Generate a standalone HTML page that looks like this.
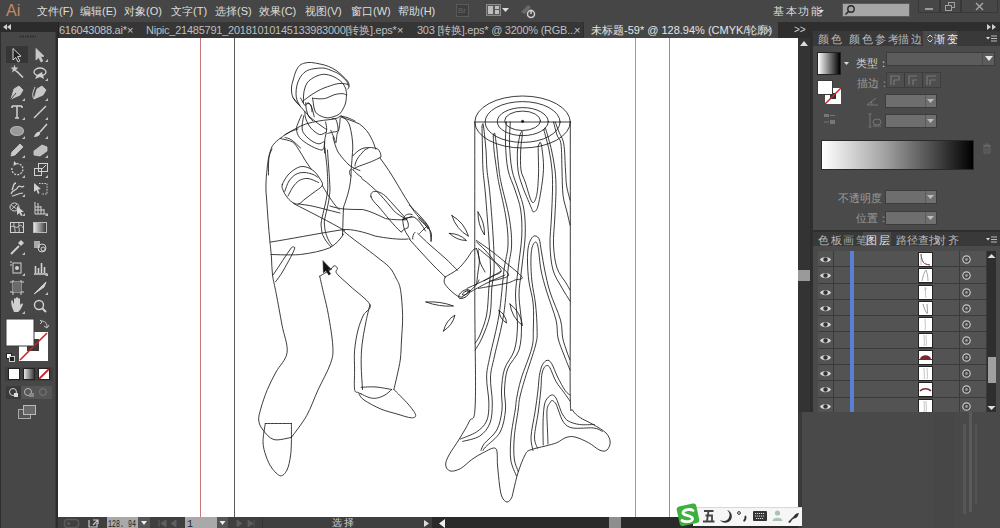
<!DOCTYPE html>
<html><head><meta charset="utf-8">
<style>
*{margin:0;padding:0;box-sizing:border-box}
html,body{width:1000px;height:528px;overflow:hidden;background:#2d2d2d;font-family:"Liberation Sans",sans-serif}
.a{position:absolute}
.t{position:absolute;white-space:nowrap;font-size:11px;line-height:12px;color:#d0d0d0}
#menubar{left:0;top:0;width:1000px;height:22px;background:#464646}
#tabbar{left:58px;top:22px;width:752px;height:16px;background:#2e2e2e}
#lefttop{left:0;top:22px;width:58px;height:10px;background:#2b2b2b}
#toolbar{left:1px;top:32px;width:55px;height:496px;background:#474747;border-right:1px solid #3a3a3a}
#canvas{left:58px;top:38px;width:740px;height:479px;background:#fff;overflow:hidden}
#status{left:58px;top:517px;width:740px;height:11px;background:#3c3c3c}
#vscroll{left:798px;top:38px;width:12px;height:479px;background:#333}
#right{left:811px;top:22px;width:189px;height:506px;background:#2e2e2e}
.menu{top:5px;color:#dedede}
</style></head><body>
<div id="menubar" class="a">
  <div class="t" style="left:6px;top:2px;font-size:16px;line-height:18px;color:#c48a62">Ai</div>
  <div class="t menu" style="left:37px">文件(F)</div>
  <div class="t menu" style="left:80px">编辑(E)</div>
  <div class="t menu" style="left:124px">对象(O)</div>
  <div class="t menu" style="left:171px">文字(T)</div>
  <div class="t menu" style="left:215px">选择(S)</div>
  <div class="t menu" style="left:259px">效果(C)</div>
  <div class="t menu" style="left:305px">视图(V)</div>
  <div class="t menu" style="left:351px">窗口(W)</div>
  <div class="t menu" style="left:398px">帮助(H)</div>
  <!-- Br -->
  <div class="a" style="left:456px;top:4px;width:13px;height:13px;border:1px solid #5a5a5a;background:#3e3e3e"></div>
  <div class="t" style="left:458px;top:5px;font-size:8px;color:#666">Br</div>
  <!-- arrange -->
  <div class="a" style="left:486px;top:4px;width:15px;height:12px;border:1px solid #8a8a8a;background:#5a5a5a"></div>
  <div class="a" style="left:488px;top:6px;width:5px;height:8px;background:#bdbdbd"></div>
  <div class="a" style="left:495px;top:6px;width:4px;height:3px;background:#bdbdbd"></div>
  <div class="a" style="left:495px;top:10px;width:4px;height:4px;background:#bdbdbd"></div>
  <svg class="a" style="left:502px;top:8px" width="7" height="5"><path d="M0 0H7L3.5 4z" fill="#ddd"/></svg>
  <!-- sync -->
  <svg class="a" style="left:519px;top:3px" width="20" height="16"><path d="M2 9 L9 2 L12 4 L6 11z" fill="#6a6a6a"/><circle cx="12" cy="11" r="3.5" fill="none" stroke="#cfcfcf" stroke-width="1.5"/><path d="M12 6.5V11" stroke="#cfcfcf" stroke-width="1.5"/></svg>
  <div class="t" style="left:773px;top:5px;color:#d8d8d8;letter-spacing:1.5px">基本功能</div>
  <svg class="a" style="left:818px;top:10px" width="6" height="4"><path d="M0 0H6L3 3z" fill="#ddd"/></svg>
  <div class="a" style="left:842px;top:3px;width:68px;height:14px;background:#a6a6a6;border:1px solid #5a5a5a"></div>
  <svg class="a" style="left:844px;top:4px" width="12" height="12"><circle cx="7" cy="5" r="3.2" fill="none" stroke="#2a2a2a" stroke-width="1.4"/><path d="M4.7 7.3L1.5 10.5" stroke="#2a2a2a" stroke-width="1.6"/></svg>
  <div class="a" style="left:918px;top:-1px;width:22px;height:14px;border:1px solid #383838;background:#474747"></div>
  <div class="a" style="left:925px;top:8px;width:8px;height:2px;background:#9a9a9a"></div>
  <div class="a" style="left:940px;top:-1px;width:21px;height:14px;border:1px solid #383838;background:#474747"></div>
  <svg class="a" style="left:945px;top:2px" width="11" height="9"><rect x="3.5" y="0.5" width="6" height="5" fill="none" stroke="#a0a0a0"/><rect x="0.5" y="3.5" width="6" height="5" fill="#474747" stroke="#a0a0a0"/></svg>
  <div class="a" style="left:961px;top:-1px;width:37px;height:14px;border:1px solid #383838;background:#474747"></div>
  <svg class="a" style="left:975px;top:2px" width="9" height="9"><path d="M1 1L8 8M8 1L1 8" stroke="#a8a8a8" stroke-width="1.4"/></svg>
</div>
<div id="lefttop" class="a"><svg class="a" style="left:3px;top:2px" width="8" height="6"><path d="M4 0L0 3L4 6zM8 0L4 3L8 6z" fill="#cfcfcf"/></svg></div>
<div id="tabbar" class="a">
  <div class="a" style="left:0;top:0;width:525px;height:16px;background:#363636"></div><div class="a" style="left:0;top:0;width:1px;height:16px;background:#222"></div>
  <div class="t" style="left:1px;top:2px;color:#c2c2c2;letter-spacing:-0.25px">616043088.ai*</div>
  <div class="t" style="left:69px;top:2px;color:#c8c8c8">×</div>
  <div class="t" style="left:88px;top:2px;color:#bdbdbd;letter-spacing:-0.24px">Nipic_21485791_20181010145133983000[转换].eps*</div>
  <div class="t" style="left:339px;top:2px;color:#c8c8c8">×</div>
  <div class="t" style="left:359px;top:2px;color:#bdbdbd;letter-spacing:-0.25px">303 [转换].eps* @ 3200% (RGB...</div>
  <div class="t" style="left:516px;top:2px;color:#c8c8c8">×</div>
  <div class="a" style="left:526px;top:0;width:194px;height:16px;background:#464646"></div>
  <div class="t" style="left:533px;top:2px;color:#e4e4e4">未标题-59* @ 128.94% (CMYK/轮廓)</div>
  <div class="t" style="left:707px;top:2px;color:#d0d0d0">×</div>
  <div class="t" style="left:736px;top:2px;color:#d0d0d0;font-size:10px">&gt;&gt;</div>
</div>

<div id="toolbar" class="a"></div>
<svg class="a" style="left:0;top:0" width="58" height="528">
 <g fill="none" stroke="#d2d2d2" stroke-width="1.2">
  <!-- header grip -->
  <path d="M20 36.5H36" stroke="#2e2e2e" stroke-width="2" stroke-dasharray="1.5 1"/>
  <rect x="6" y="46" width="22" height="17" fill="#363636" stroke="none"/>
  <!-- selection -->
  <path d="M13 48.5L13 60L15.8 57.5L18 62L19.8 61L17.6 56.6L21 56.2Z" fill="#222" stroke="#d8d8d8" stroke-width="1"/>
  <!-- direct select -->
  <path d="M36 48.5L36 60L38.8 57.5L41 62L42.8 61L40.6 56.6L44 56.2Z" fill="#c8c8c8" stroke="#c8c8c8" stroke-width="0.8"/>
  <!-- magic wand -->
  <path d="M16.5 71L23 77.5" stroke-width="1.6"/>
  <path d="M14.5 64.8L15.6 67.5L18.5 67.7L16.2 69.6L17.0 72.4L14.5 70.8L12.0 72.4L12.8 69.6L10.5 67.7L13.4 67.5Z" fill="#c8c8c8" stroke="none"/>
  <!-- lasso -->
  <ellipse cx="40" cy="72" rx="6" ry="4" stroke-width="1.3"/>
  <path d="M37 75L35 79L40 77L44 79L42 72Z" fill="#d0d0d0" stroke="none"/>
  <!-- pen -->
  <path d="M11 99L14 89L19 86L23 90L20 95Z" fill="#c8c8c8" stroke="#d0d0d0" stroke-width="0.8"/>
  <path d="M11 99L16 93" stroke="#444" stroke-width="1"/>
  <!-- curvature pen -->
  <path d="M34 99L37 89L42 86L46 90L43 95Z" fill="#c8c8c8" stroke="#d0d0d0" stroke-width="0.8"/>
  <path d="M34 99C31 95 34 90 35 87" stroke-width="1"/>
  <!-- type -->
  <path d="M12 106H22M17 106V118M15 118H19M12 106V108M22 106V108" stroke-width="1.5"/>
  <!-- line -->
  <path d="M34 118L46 106" stroke-width="1.4"/>
  <!-- ellipse -->
  <ellipse cx="17" cy="131" rx="6.5" ry="4.5" fill="#9a9a9a" stroke="#b0b0b0"/>
  <!-- brush -->
  <path d="M47 124L40 132" stroke-width="1.5"/>
  <path d="M34 137C36 137 41 136 40 132C38 131 35 133 34 137Z" fill="#d0d0d0" stroke="none"/>
  <!-- pencil -->
  <path d="M11 156L12 152L20 144L23 147L15 155Z" fill="#c8c8c8" stroke="#d0d0d0" stroke-width="0.8"/>
  <!-- eraser -->
  <path d="M34 155L34 151L42 145L47 147L47 151L40 156Z" fill="#c0c0c0" stroke="#d0d0d0" stroke-width="0.8"/>
  <!-- rotate -->
  <path d="M12 168A5.5 5.5 0 1 0 15 164.2" stroke-width="1.3" stroke-dasharray="2 1.2"/>
  <path d="M14 161L17 164L13.5 166Z" fill="#d0d0d0" stroke="none"/>
  <!-- scale -->
  <rect x="34.5" y="168.5" width="7" height="7" stroke-width="1"/>
  <rect x="38.5" y="163.5" width="9" height="8" stroke-width="1"/>
  <path d="M41 170L46 165" stroke-width="1"/>
  <!-- warp -->
  <path d="M11 194C13 188 16 192 18 187C20 184 21 189 24 186M12 190C14 186 13 183 16 183" stroke-width="1.3"/>
  <path d="M12 196C15 196 18 193 23 193" stroke-width="1.2"/>
  <!-- free transform -->
  <path d="M34 183L34 192L36.5 190L38 194L39.5 193L38 189.5L41 189Z" fill="#d0d0d0" stroke="none"/>
  <path d="M39 183.5H47V194H41" stroke-width="1" stroke-dasharray="1.5 1.2"/>
  <!-- shape builder -->
  <ellipse cx="14.5" cy="207" rx="4.5" ry="4" stroke-width="1"/>
  <path d="M11 205L18 210M12 209L17 204" stroke-width="0.8"/>
  <path d="M17 206L17 215L19.3 213L21 216L22.5 215L21 212L24 212Z" fill="#d0d0d0" stroke="none"/>
  <!-- perspective grid -->
  <path d="M35 202V214H47M38 203V214M41 206V214M44 209V214M35 207H41M35 210H44" stroke-width="1"/>
  <!-- mesh -->
  <rect x="10.5" y="222.5" width="13" height="10" stroke-width="1"/>
  <path d="M11 227C14 224 16 230 19 226C21 224 22 226 23 228M14 223C13 227 16 229 15 232M19 223C18 227 20 229 19 232" stroke-width="0.9"/>
  <!-- gradient -->
  <defs><linearGradient id="tg" x1="0" x2="1"><stop offset="0" stop-color="#eee"/><stop offset="1" stop-color="#333"/></linearGradient></defs>
  <rect x="33.5" y="222.5" width="13" height="10" fill="url(#tg)" stroke="#bbb" stroke-width="1"/>
  <!-- eyedropper -->
  <path d="M11 254L19 246" stroke-width="1.8"/>
  <path d="M18 243L21 240L24 243L21 246Z" fill="#d0d0d0" stroke="none"/>
  <!-- blend -->
  <rect x="34" y="241" width="6" height="7" fill="#aaa" stroke="none"/>
  <circle cx="42" cy="248" r="4" stroke-width="1"/>
  <circle cx="43" cy="249" r="2" stroke-width="1"/>
  <!-- symbol sprayer -->
  <rect x="13" y="263" width="8" height="10" stroke-width="1"/>
  <circle cx="17" cy="268" r="2" fill="#d0d0d0" stroke="none"/>
  <path d="M10 262H12M10 265H12" stroke-width="1"/>
  <!-- graph -->
  <path d="M34 274H47M35.5 273V266M38.5 273V268M41.5 273V263M44.5 273V267" stroke-width="1.6"/>
  <!-- artboard -->
  <path d="M10 282H24M10 292H24M13 280V295M21 280V295" stroke-width="1"/>
  <rect x="13" y="282" width="8" height="10" fill="#6a6a6a" stroke="none"/>
  <!-- slice -->
  <path d="M34 294L46 282L44 287Z" fill="#d0d0d0" stroke="#d2d2d2" stroke-width="1"/>
  <!-- hand -->
  <path d="M12 307C11 304 11 300 12 300C13 300 13 303 14 304V299C14 298 16 298 16 299V303V298C16 297 18 297 18 298V303V299C18 298 20 298 20 299V305C21 304 22 303 23 304C22 307 20 311 18 312H14Z" fill="#d0d0d0" stroke="none"/>
  <!-- zoom -->
  <circle cx="39" cy="305" r="4.5" stroke-width="1.4"/>
  <path d="M42.5 308.5L46 312" stroke-width="2"/>
  <!-- flyout triangles -->
  <g fill="#c0c0c0" stroke="none">
   <path d="M45 62H48V59Z"/><path d="M45 81H48V78Z"/><path d="M22 101H25V98Z"/><path d="M45 101H48V98Z"/>
   <path d="M22 120H25V117Z"/><path d="M45 120H48V117Z"/><path d="M22 139H25V136Z"/><path d="M45 139H48V136Z"/>
   <path d="M22 158H25V155Z"/><path d="M45 158H48V155Z"/><path d="M22 178H25V175Z"/><path d="M45 178H48V175Z"/>
   <path d="M22 197H25V194Z"/><path d="M22 216H25V213Z"/><path d="M45 216H48V213Z"/>
   <path d="M22 255H25V252Z"/><path d="M22 276H25V273Z"/><path d="M45 276H48V273Z"/>
   <path d="M45 295H48V292Z"/><path d="M22 314H25V311Z"/>
  </g>
  <!-- separators -->
  <path d="M4 83.5H53M4 160.5H53M4 198.5H53M4 237.5H53M4 277.5H53M4 316.5H53" stroke="#444" stroke-width="1"/>
  <!-- fill/stroke -->
  <rect x="19" y="332" width="29" height="29" fill="#fff" stroke="none"/>
  <rect x="27" y="339" width="12" height="12" fill="#3a3a3a" stroke="none"/>
  <path d="M20 360L47 333" stroke="#c0282c" stroke-width="1.6"/>
  <rect x="6" y="319" width="28" height="27" fill="#fff" stroke="#3a3a3a" stroke-width="1"/>
  <path d="M41 321C45 321 47 323 47 327M44 326L47 328L49 325M40 320L42 322L40 324" stroke="#c8c8c8" stroke-width="1"/>
  <rect x="6.5" y="353.5" width="5" height="5" fill="#fff" stroke="#222" stroke-width="1"/>
  <rect x="9.5" y="356.5" width="5" height="5" fill="#222" stroke="#ccc" stroke-width="1"/>
  <!-- mode buttons -->
  <rect x="5" y="367" width="48" height="14" fill="#3e3e3e" stroke="none"/>
  <rect x="8.5" y="368.5" width="11" height="11" fill="#fff" stroke="#222" stroke-width="1"/>
  <rect x="23.5" y="368.5" width="11" height="11" fill="url(#tg)" stroke="#222" stroke-width="1"/>
  <rect x="38.5" y="368.5" width="11" height="11" fill="#fff" stroke="#222" stroke-width="1"/>
  <path d="M39 379L49 369" stroke="#c0282c" stroke-width="1.8"/>
  <!-- draw modes -->
  <rect x="6" y="386" width="46" height="13" fill="#3a3a3a" stroke="none"/>
  <rect x="21" y="386" width="31" height="13" fill="#555" stroke="none"/>
  <circle cx="13" cy="392" r="3.5" stroke="#ccc" stroke-width="1"/>
  <rect x="14" y="393" width="4" height="4" fill="#ddd" stroke="none"/>
  <circle cx="28" cy="392" r="3.5" stroke="#bbb" stroke-width="1"/>
  <rect x="29" y="393" width="5" height="4" fill="#888" stroke="none"/>
  <circle cx="43" cy="392" r="3.5" stroke="#777" stroke-width="1"/>
  <!-- screen mode -->
  <rect x="18.5" y="409.5" width="12" height="9" fill="#555" stroke="#aaa" stroke-width="1"/>
  <rect x="23.5" y="405.5" width="12" height="9" fill="#6a6a6a" stroke="#bbb" stroke-width="1"/>
 </g>
</svg>

<div id="canvas" class="a">
<svg class="a" style="left:0;top:0" width="740" height="479" viewBox="58 38 740 479">
 <g stroke-width="1" fill="none">
  <path d="M200.5 38V517M669.5 38V517" stroke="#c87878"/>
  <path d="M234.5 38V517" stroke="#5a5a5a"/>
  <path d="M635.5 38V517" stroke="#9a9a9a"/>
 </g>
 <g stroke="#1a1a1a" stroke-width="0.85" fill="none" stroke-linejoin="round" stroke-linecap="round">
  <path d="M298.9 105.0C298.2 104.2 295.6 101.7 294.5 100.0C293.4 98.3 292.5 97.0 292.0 94.8C291.5 92.6 291.3 89.5 291.5 87.0C291.7 84.5 292.4 82.7 293.2 80.0C293.9 77.3 294.9 73.5 296.0 71.0C297.1 68.5 298.5 66.5 300.0 65.2C301.5 63.9 303.1 63.5 305.0 63.0C306.9 62.5 308.9 62.3 311.4 62.5C313.9 62.7 317.1 63.4 320.0 64.0C322.9 64.7 325.7 65.2 328.5 66.4C331.3 67.6 334.6 69.3 337.0 71.0C339.4 72.7 341.4 74.9 343.2 76.6C344.9 78.3 346.5 79.7 347.5 81.0C348.5 82.3 348.8 83.5 349.0 84.5C349.2 85.5 349.2 86.2 349.0 87.0C348.8 87.8 348.0 88.7 347.8 89.0"/>
<path d="M300.0 106.0C299.5 105.0 297.7 102.1 297.0 100.0C296.3 97.9 296.0 96.1 296.0 93.6C296.0 91.1 296.3 87.7 297.0 85.0C297.7 82.3 298.7 79.9 300.0 77.7C301.3 75.5 303.1 73.4 305.0 72.0C306.9 70.6 308.4 69.9 311.4 69.2C314.4 68.5 319.7 67.9 322.8 68.0C325.9 68.1 327.6 69.1 330.0 70.0C332.4 70.9 335.5 72.1 337.5 73.2C339.5 74.3 340.5 75.2 342.0 76.5C343.5 77.8 345.5 79.5 346.6 81.1C347.7 82.7 348.2 85.2 348.5 86.0"/>
<path d="M303.5 102.7C303.5 101.4 303.4 97.3 303.6 95.0C303.8 92.7 304.0 91.0 304.6 89.0C305.2 87.0 305.9 84.7 307.0 83.0C308.1 81.3 309.6 80.2 311.4 78.9C313.2 77.7 315.7 76.3 318.0 75.5C320.3 74.7 322.7 74.2 325.0 74.3C327.3 74.4 329.9 75.2 332.0 76.0C334.1 76.8 335.8 77.8 337.5 78.9C339.2 80.0 340.7 81.0 342.0 82.5C343.3 84.0 344.7 86.0 345.5 88.0C346.3 90.0 346.4 93.7 346.6 94.8"/>
<path d="M302.3 101.6C303.4 100.8 306.6 98.2 309.0 96.5C311.4 94.8 314.5 92.8 317.0 91.4C319.5 90.0 321.7 89.0 324.0 88.0C326.3 87.0 328.7 86.4 330.7 85.7C332.7 85.0 334.1 84.4 336.0 84.0C337.9 83.6 339.9 83.3 342.0 83.4C344.1 83.5 347.2 84.3 348.3 84.5"/>
<path d="M312.5 98.2C313.6 98.3 316.7 98.8 319.0 98.8C321.3 98.8 323.7 98.9 326.2 98.2C328.7 97.5 331.4 95.6 334.0 94.8C336.6 94.0 340.0 93.6 342.0 93.6C344.0 93.6 345.3 94.6 346.0 94.8"/>
<path d="M312.5 98.2C312.6 98.8 313.0 100.7 313.2 102.0C313.4 103.3 313.3 104.3 313.7 106.0C314.1 107.7 314.4 110.4 315.4 112.0C316.4 113.6 318.2 114.7 319.8 115.6C321.4 116.5 323.5 117.1 325.0 117.5C326.5 117.9 327.5 118.0 329.0 117.8C330.5 117.6 332.2 117.1 334.0 116.5C335.8 115.9 338.0 115.2 339.5 114.0C341.0 112.8 342.0 110.8 343.0 109.0C344.0 107.2 345.0 105.4 345.6 103.0C346.2 100.6 346.4 96.2 346.6 94.8"/>
<path d="M305.7 102.7C305.8 103.4 305.8 105.5 306.0 107.0C306.2 108.5 306.5 110.3 307.0 112.0C307.5 113.7 308.0 115.5 309.0 117.0C310.0 118.5 312.3 120.3 313.0 121.0"/>
<path d="M306.5 104.0C306.9 103.9 308.2 103.2 309.0 103.5C309.8 103.8 310.9 104.6 311.4 106.0C311.9 107.4 311.9 110.8 312.0 111.8"/>
  <path d="M285.0 135.0C286.7 134.0 291.5 130.8 295.0 129.0C298.5 127.2 301.7 125.3 305.8 124.0C309.9 122.7 314.5 121.8 319.4 120.9C324.3 120.0 331.5 119.6 335.0 118.8C338.5 118.0 339.3 116.6 340.2 116.2"/>
<path d="M340.2 116.2C341.3 116.4 344.5 116.7 347.0 117.5C349.5 118.3 353.7 120.4 355.0 121.0"/>
<path d="M301.7 114.7C301.2 115.9 299.4 119.6 298.5 122.0C297.6 124.4 296.3 126.7 296.5 129.3C296.7 131.9 297.5 135.0 299.6 137.6C301.7 140.2 305.7 142.9 309.0 144.9C312.3 146.9 317.0 148.9 319.4 149.6C321.8 150.3 322.6 150.3 323.5 149.0C324.4 147.7 324.4 143.0 324.6 141.8"/>
<path d="M303.8 115.7C303.5 117.2 302.3 122.2 302.2 125.0C302.1 127.8 301.9 130.0 303.2 132.4C304.5 134.8 307.5 137.8 310.0 139.7C312.5 141.6 316.1 143.5 318.3 143.8C320.6 144.1 322.6 142.1 323.5 141.8"/>
<path d="M304.8 111.5C305.0 112.7 304.8 116.0 305.8 118.8C306.8 121.6 308.7 125.6 311.0 128.2C313.3 130.8 317.0 133.8 319.4 134.5C321.8 135.2 324.6 132.8 325.6 132.4"/>
<path d="M293.3 98.0C294.2 99.0 296.6 102.0 298.5 104.2C300.4 106.5 302.6 109.1 304.8 111.5C307.1 113.9 308.7 116.0 312.0 118.8C315.3 121.6 322.2 126.5 324.6 128.2C327.1 129.9 326.4 129.1 326.7 129.2"/>
<path d="M300.6 98.0C301.3 99.2 303.7 104.4 304.8 105.3C305.9 106.2 306.3 103.8 307.0 103.5C307.7 103.2 308.2 102.4 309.0 103.2C309.8 104.0 311.1 106.1 312.0 108.4C312.9 110.7 313.8 115.4 314.2 116.8"/>
<path d="M325.6 122.0C325.8 123.2 326.7 126.9 326.7 129.2C326.7 131.6 325.9 133.9 325.5 136.0C325.1 138.1 324.8 138.9 324.6 141.8C324.5 144.6 324.6 151.1 324.6 153.0"/>
<path d="M340.2 117.8C340.0 119.5 339.7 125.4 339.2 128.2C338.7 131.0 337.5 132.1 337.0 134.5C336.5 136.9 336.5 142.3 336.0 142.8C335.5 143.3 334.9 139.7 334.0 137.6C333.1 135.5 331.3 131.5 330.8 130.3"/>
<path d="M331.9 118.8C332.6 118.9 335.0 117.6 336.0 119.5C337.0 121.4 338.5 128.2 338.0 130.3C337.5 132.4 334.7 131.5 333.0 132.0C331.3 132.5 328.6 133.2 327.7 133.4"/>
<path d="M285.0 137.6C286.0 137.9 288.6 138.0 291.2 139.7C293.9 141.4 299.0 146.6 300.6 148.0"/>
  <!-- SHIRT BODY left outline -->
  <path d="M297.9 129C291 131 286 133.5 282.7 136.5C276 141 272.5 145 271.4 148C268.5 155 267.6 163 267 170C265.8 180 265.5 190 266.6 199C267.5 212 268.5 228 270 242"/>
  <path d="M282.3 184.6C283.1 182.1 285.7 177.7 288.0 175.0C290.3 172.3 293.5 169.9 296.0 168.5C298.5 167.1 300.5 166.4 303.0 166.5C305.5 166.6 308.8 167.8 311.0 169.0C313.2 170.2 314.8 171.8 316.3 173.5C317.8 175.2 319.0 177.0 320.0 179.0C321.0 181.0 323.5 183.2 322.3 185.5C321.1 187.8 315.9 190.8 313.0 193.0C310.1 195.2 307.4 197.2 305.0 199.0C302.6 200.8 300.7 203.5 298.5 204.0C296.3 204.5 294.0 203.2 292.0 202.0C290.0 200.8 288.0 198.5 286.5 196.5C285.0 194.5 283.7 192.0 283.0 190.0C282.3 188.0 281.5 187.1 282.3 184.6Z"/>
<path d="M284.8 191.4C285.5 189.7 287.1 183.8 289.0 181.0C290.9 178.2 293.4 175.7 295.9 174.3C298.4 172.9 301.1 172.5 304.0 172.5C306.9 172.5 310.7 173.6 313.0 174.4C315.3 175.2 317.2 177.0 318.0 177.5"/>
<path d="M288.0 196.0C288.8 194.5 291.1 189.6 293.0 187.0C294.9 184.4 296.8 181.9 299.3 180.5C301.8 179.1 304.8 178.2 308.0 178.5C311.2 178.8 316.8 181.8 318.5 182.5"/>
<path d="M280.6 138.6C282.6 139.2 289.4 140.1 292.5 142.0C295.6 143.9 297.0 147.2 299.0 150.0C301.0 152.8 302.4 155.8 304.4 159.0C306.4 162.2 310.1 167.6 311.2 169.3"/>
<path d="M322.3 185.5C323.2 187.1 325.9 191.8 328.0 195.0C330.1 198.2 333.1 202.5 335.0 205.0C336.9 207.5 338.8 209.2 339.5 210.0"/>
<path d="M298.5 204.0C300.8 204.3 307.1 205.0 312.0 206.0C316.9 207.0 323.3 208.8 328.0 210.0C332.7 211.2 338.0 212.5 340.0 213.0"/>
<path d="M272.0 148.9C271.6 149.9 270.1 152.8 269.5 155.0C268.9 157.2 268.8 158.7 268.6 162.0C268.4 165.3 268.5 172.8 268.5 175.0"/>
  <!-- placket -->
  <path d="M325 148C325.5 155 326.5 162 327 166.8C327.5 175 328 185 327.7 190C326 205 322 215 321 224C321.5 230 322 234 323 235.5C325 240 328 244 331 246.8"/>
  <path d="M327.5 150C328 160 329.5 175 330 190C329 205 325 215 324.3 221.8C324.5 228 325.5 233 326.6 235.5C328 240 330 243 332.3 245.7"/>
  <!-- right collar / shoulder -->
  <path d="M341.4 115.7C345 118 348 121 349.5 125C351.5 132 352.8 140 352.8 148C352 160 351 170 351 176C350 190 346 200 343.6 207C343 215 343 225 342.5 235"/>
  <path d="M333 137C334 142 336 148 338 152C342 158 346 162 349 165C352 167.5 356 169 360 170.6"/>
  <path d="M341.4 117.3C347 119 353 121 359.5 124C365 128 369 133 371 137.7C373 141 374.5 145 375.5 149"/>
  <!-- sleeve cuff right -->
  <path d="M352.7 156C356 152 360 149 364 148C369 147 374 147.5 377.7 149C380 151 381 154 381 157C376 160 368 163 359.5 166C357 167 354.5 168 352.7 169.5C355 172 358 175 361.8 177.5"/>
  <path d="M355 166C355 162 358 157 362 153C364 150 366 149 368 148.5"/>
  <path d="M350.5 169.5C349 171 349 174 351 176"/>
  <!-- forearm -->
  <path d="M380 158C386 166 392 175 398 185.5C403 194 408 202 411.8 208C415 213 418 216 421 219.5C423.5 222 426 225 427.7 228.6"/>
  <path d="M361.8 178.6C368 183 374 188.5 380 194.5C385 200 390 206 393.6 210.5C397 214 402 217 407 219.5"/>
  <path d="M371 196.8C370 193.5 372 191 376.4 191.4C380 192 383 194 385.5 196C392 203 399 211 406 218.6C408 221 409 225 408 227.7C405 229 402 230 401.4 232.3C394 226 385 214 378 206C375 203 372 200 371 196.8Z"/>
  <path d="M402.7 219.5C406 218 410 217 414 217C417 219 420 222 421 224C423 226.5 424.5 229 425.5 231"/>
  <!-- second forearm / hands -->
  <path d="M418.4 218.6C424 224 429 228 431 232.3C432 236 431.5 239 431 241.4"/>
  <path d="M403.6 218.6C404 215 408 213 412 214.5M419.5 217.5C423 220 426 223 428.6 227.7"/>
  <path d="M415 232.3C413 234 412.5 237 412.7 239"/>
  <!-- upper arm band -->
  <path d="M330 206C336 208 340 208.5 343.6 209C350 209.5 356 209.5 362.7 209.5C370 211 378 215 385.5 218.6C394 220 400 219.8 406 219.8"/>
  <path d="M271 242C290 239 315 234 343.6 229.5C352 229 364 232 375 236C385 238 400 240 408 239"/>
  <path d="M271 254.5C285 255 295 255 300.5 254.5C312 253 322 251 330 247.7C336 244 340 240 343.6 234"/>
    <path d="M293.6 203.6C310 212 330 222 344.5 230.5"/>
  <!-- pocket -->
  <path d="M273 275C280 265 286 255 291.4 247.7C292.5 246.5 294.5 246.5 294.8 247.7C294 252 288 262 283 271C280 276 277 280 275.5 281.8"/>
  <path d="M270.0 242.0C270.2 244.7 271.1 252.5 271.5 258.0C271.9 263.5 271.7 269.1 272.5 275.0C273.3 280.9 274.6 285.3 276.2 293.6C277.8 301.9 280.2 315.2 282.0 325.0C283.8 334.8 288.1 344.6 287.1 352.4C286.1 360.2 279.3 365.8 276.0 372.0C272.7 378.2 269.9 383.5 267.4 389.5C264.9 395.5 262.4 402.9 261.0 408.0C259.6 413.1 258.4 416.3 258.7 420.0C259.0 423.7 260.4 426.7 263.0 430.0C265.6 433.3 269.3 438.4 274.0 439.6C278.7 440.8 288.5 437.8 291.4 437.4"/>
<path d="M319.7 276.2C320.4 279.3 322.5 288.5 324.0 295.0C325.5 301.5 327.0 306.9 328.5 315.4C330.0 323.9 332.4 337.9 332.8 345.9C333.2 353.9 333.1 355.9 330.6 363.3C328.1 370.7 322.0 381.3 318.0 390.0C314.0 398.7 311.1 407.7 306.7 415.6C302.3 423.5 293.9 433.8 291.4 437.4"/>
<path d="M265.3 423.5C269.6 423.5 287.0 423.5 291.4 423.5"/>
<path d="M265.3 423.5C264.9 426.6 262.9 436.4 263.0 441.8C263.1 447.2 264.5 451.6 266.0 456.0C267.5 460.4 269.4 464.7 271.8 468.0C274.2 471.3 278.0 475.5 280.5 475.8C283.0 476.1 285.3 473.3 287.0 470.0C288.7 466.7 289.8 460.7 290.5 456.0C291.2 451.3 291.2 447.2 291.4 441.8C291.5 436.4 291.4 426.6 291.4 423.5"/>
<path d="M319.7 276.2C320.8 275.6 324.2 273.6 326.0 272.5C327.8 271.4 329.4 270.6 330.6 269.6C331.8 268.6 332.2 267.1 333.0 266.5C333.8 265.9 334.8 265.7 335.5 266.0C336.2 266.3 337.2 267.2 337.4 268.5C337.6 269.8 334.7 270.6 336.8 273.5C338.9 276.4 344.5 280.8 350.0 286.0C355.5 291.2 367.6 299.7 369.9 304.5C372.1 309.3 365.5 310.8 363.5 315.0C361.5 319.2 359.5 324.1 358.0 330.0C356.5 335.9 355.2 343.6 354.6 350.3C354.0 357.0 354.6 363.5 354.6 370.0C354.6 376.5 354.0 385.8 354.6 389.5C355.2 393.2 356.9 391.8 358.0 392.5C359.1 393.2 360.7 393.7 361.2 393.9"/>
<path d="M369.9 304.5C369.2 307.8 366.8 317.2 365.5 324.0C364.2 330.8 362.7 338.2 362.0 345.0C361.3 351.8 361.1 357.6 361.2 365.0C361.3 372.4 362.3 385.4 362.5 389.5"/>
<path d="M361.2 387.3C363.7 387.2 370.9 386.6 376.0 387.0C381.1 387.4 389.1 389.1 391.7 389.5"/>
<path d="M361.2 393.9C362.5 394.5 366.5 396.8 369.0 397.5C371.5 398.2 373.7 398.6 376.4 398.2C379.1 397.8 382.4 396.4 385.0 395.0C387.6 393.6 390.6 390.4 391.7 389.5"/>
<path d="M359.0 394.0C359.8 395.0 360.4 397.5 364.0 400.0C367.6 402.5 375.3 406.7 380.8 409.0C386.3 411.3 391.9 412.5 397.0 414.0C402.1 415.5 408.2 417.7 411.3 417.8C414.4 417.9 416.2 417.1 415.6 414.8C415.1 412.5 411.6 408.2 408.0 404.0C404.4 399.8 396.2 391.9 393.9 389.5"/>
<path d="M342.3 230.0C343.9 231.3 348.6 235.3 352.0 238.0C355.4 240.7 358.5 242.8 362.7 246.0C366.9 249.2 372.5 253.4 377.0 257.0C381.5 260.6 386.3 263.9 389.5 267.4C392.7 270.9 394.2 274.4 396.0 278.0C397.8 281.6 399.3 283.0 400.4 289.2C401.5 295.4 402.4 306.9 402.6 315.4C402.8 323.9 401.9 332.7 401.5 340.0C401.1 347.3 401.1 353.0 400.4 359.0C399.6 365.0 398.1 370.9 397.0 376.0C395.9 381.1 394.4 387.2 393.9 389.5"/>
<path d="M417.7 233.4C419.8 235.3 425.4 240.9 430.0 245.0C434.6 249.1 440.4 253.8 445.0 258.0C449.6 262.2 455.4 268.3 457.5 270.4"/>
<path d="M409.2 239.1C411.0 241.1 416.0 246.7 420.0 251.0C424.0 255.3 428.8 260.7 433.0 265.0C437.2 269.3 443.2 275.0 445.2 277.0"/>
<path d="M445.2 277.0C447.2 275.7 454.0 272.2 457.5 269.4C461.0 266.6 463.5 263.1 466.0 260.0C468.5 256.9 470.9 252.4 472.7 250.5C474.4 248.6 475.9 248.9 476.5 248.6"/>
<path d="M445.2 277.0C445.1 277.9 443.5 280.5 444.3 282.7C445.1 284.9 447.8 287.8 450.0 290.0C452.2 292.2 455.5 294.8 457.5 296.0C459.5 297.2 461.2 296.8 462.0 297.0"/>
<path d="M462.0 297.0C463.3 296.0 467.6 293.1 470.0 291.0C472.4 288.9 475.0 286.4 476.5 284.6C478.0 282.8 478.6 280.8 479.0 280.0"/>
<path d="M476.5 248.6C477.0 250.5 479.1 256.1 479.3 260.0C479.6 263.9 478.5 267.9 478.0 272.0C477.5 276.1 476.8 282.5 476.5 284.6"/>
<path d="M476.5 242.0C477.9 243.3 481.9 246.7 485.0 250.0C488.1 253.3 492.3 258.4 495.0 262.0C497.7 265.6 501.4 269.0 501.1 271.3C500.8 273.6 495.9 274.4 493.0 276.0C490.1 277.6 485.5 280.0 484.0 280.8"/>
<path d="M476.5 240.5C478.8 242.1 485.2 246.4 490.0 250.0C494.8 253.6 499.7 257.5 505.0 262.0C510.3 266.5 520.3 274.0 522.0 277.0C523.7 280.0 517.2 279.1 515.0 280.0C512.8 280.9 512.0 281.8 508.7 282.7C505.4 283.6 500.1 284.6 495.0 285.5C489.9 286.4 481.2 287.9 478.4 288.4"/>
<path d="M478.4 248.6C480.3 250.2 486.4 255.1 490.0 258.0C493.6 260.9 496.9 263.2 500.0 266.0C503.1 268.8 508.7 272.8 508.7 275.0C508.7 277.2 503.1 278.0 500.0 279.0C496.9 280.0 491.7 280.7 490.0 281.0"/>
<path d="M467.0 288.4C470.0 287.0 479.3 282.9 485.0 280.0C490.7 277.1 498.3 272.8 501.0 271.3"/>
<path d="M469.9 292.2C472.8 290.7 481.1 285.9 487.0 283.0C492.9 280.1 502.0 276.3 505.0 275.0"/>
<path d="M478.0 250.0C478.3 252.0 478.8 258.3 480.0 262.0C481.2 265.7 484.2 270.3 485.0 272.0"/>
<path d="M402.6 219.2C402.9 220.9 403.2 226.3 404.5 229.6C405.8 232.9 409.2 237.5 410.2 239.1"/>
<path d="M412.0 216.4C410.7 216.8 405.6 218.5 404.0 219.0C402.4 219.5 402.8 219.2 402.6 219.2"/>
<path d="M409.2 205.0C411.0 206.8 416.7 212.2 420.0 216.0C423.3 219.8 427.2 223.5 429.0 227.7C430.8 231.9 430.7 238.8 431.0 241.0"/>
<path d="M419.6 233.4C420.3 232.7 422.7 230.3 424.0 229.0C425.3 227.7 426.7 226.3 427.2 225.8"/>
<ellipse cx="464.2" cy="294" rx="6.5" ry="3.2" transform="rotate(-35 464.2 294)"/>
<ellipse cx="465.5" cy="293" rx="3.5" ry="1.4" transform="rotate(-35 465.5 293)"/>
  <!--AXE-->
  <!-- chips -->
  <path d="M451.9 215.5Q456.1 229.2 468.5 236.3Q464.3 222.6 451.9 215.5Z"/>
  <path d="M449.5 233.4Q456.6 240.4 466.5 240.5Q459.4 233.5 449.5 233.4Z"/>
  <path d="M426.0 302.0Q439.3 307.0 453.5 306.0Q440.2 301.0 426.0 302.0Z"/>
  <path d="M443.5 331.0Q452.6 325.4 455.0 315.0Q445.9 320.6 443.5 331.0Z"/>
  <path d="M478.0 212.0Q477.6 224.5 484.5 235.0Q484.9 222.5 478.0 212.0Z"/>
  <path d="M499.0 310.5Q499.5 318.7 506.5 323.0Q506.0 314.8 499.0 310.5Z"/>
  <path d="M510.0 304.0Q511.7 317.4 522.5 325.5Q520.8 312.1 510.0 304.0Z"/>
  <!-- LOG top -->
  <ellipse cx="522.6" cy="122" rx="47.7" ry="26"/>
  <ellipse cx="522.6" cy="122" rx="37.5" ry="20.4"/>
  <ellipse cx="522.8" cy="121.6" rx="25.5" ry="14"/>
  <ellipse cx="522.6" cy="120.8" rx="17.9" ry="9.7"/>
  <path d="M474.8 122H570.3"/>
  <circle cx="522.6" cy="121.4" r="1.1" fill="#111"/>
  <path d="M474.8 122.0C474.8 151.7 474.7 252.8 474.8 300.0C474.9 347.2 476.1 384.8 475.2 405.0C474.3 425.2 472.1 415.3 469.5 421.0C466.9 426.7 462.7 433.3 459.3 439.0C455.9 444.7 451.3 450.7 449.0 455.0C446.7 459.3 445.5 462.3 445.7 465.0C445.9 467.7 447.7 470.4 450.2 471.0C452.7 471.6 456.9 470.5 460.5 468.6C464.1 466.7 468.0 462.1 471.8 459.5C475.6 456.9 479.2 454.5 483.2 452.7C487.2 450.9 493.3 446.4 495.7 448.5C498.1 450.6 496.9 458.9 497.5 465.0C498.1 471.1 498.8 479.7 499.5 485.0C500.2 490.3 500.8 494.2 502.0 497.0C503.2 499.8 505.4 501.8 507.0 502.0C508.6 502.2 510.4 500.0 511.5 498.0C512.6 496.0 512.5 494.3 513.6 490.0C514.7 485.7 516.3 477.8 518.2 472.0C520.1 466.2 523.0 458.7 525.0 455.0C527.0 451.3 526.6 451.5 530.0 450.0C533.4 448.5 541.0 447.2 545.5 446.0C550.0 444.8 553.4 444.1 556.8 442.7C560.2 441.3 563.0 438.4 566.0 437.5C569.0 436.6 571.2 436.1 575.0 437.0C578.8 437.9 584.4 440.5 588.6 442.7C592.8 444.9 596.9 449.1 600.0 450.3C603.1 451.5 605.3 451.4 607.0 450.0C608.7 448.6 610.4 444.8 610.2 442.0C610.0 439.2 608.8 435.9 606.0 433.0C603.2 430.1 597.5 427.1 593.2 424.5C588.9 421.9 583.5 419.9 580.0 417.5C576.5 415.1 574.1 412.9 572.5 410.0C570.9 407.1 570.7 418.3 570.3 400.0C569.9 381.7 570.3 346.3 570.3 300.0C570.3 253.7 570.3 151.7 570.3 122.0"/>
<path d="M482.0 127.0C482.1 126.5 482.4 123.8 482.7 123.8C483.0 123.8 483.1 122.6 483.6 127.0C484.2 131.4 485.4 142.8 486.0 150.0C486.6 157.2 486.3 162.5 487.0 170.0C487.7 177.5 488.9 183.2 490.0 195.0C491.1 206.8 492.7 228.5 493.4 241.0C494.1 253.5 494.3 262.2 494.0 270.0C493.7 277.8 492.5 280.5 491.8 288.0C491.1 295.5 491.6 306.7 490.0 315.0C488.4 323.3 484.5 332.2 482.0 338.0C479.5 343.8 476.3 348.0 475.2 350.0"/>
<path d="M482.0 127.0C482.1 130.8 482.3 142.8 482.5 150.0C482.7 157.2 482.5 162.5 483.0 170.0C483.5 177.5 484.5 183.2 485.5 195.0C486.5 206.8 488.2 228.5 489.0 241.0C489.8 253.5 490.5 262.2 490.5 270.0C490.5 277.8 489.5 280.5 488.9 288.0C488.2 295.5 488.1 307.2 486.6 315.0C485.1 322.8 481.9 330.3 480.0 335.0C478.1 339.7 476.0 341.7 475.2 343.0"/>
<path d="M493.3 136.0C493.5 135.5 494.1 133.0 494.4 133.0C494.7 133.0 494.8 133.2 495.2 136.0C495.6 138.8 496.4 144.3 497.0 150.0C497.6 155.7 498.3 164.3 499.0 170.0C499.7 175.7 499.7 176.0 501.4 184.0C503.1 192.0 507.6 207.8 509.3 218.0C511.0 228.2 511.8 236.3 511.6 245.0C511.4 253.7 509.3 258.3 508.0 270.0C506.7 281.7 505.9 300.7 503.6 315.0C501.4 329.3 496.7 345.7 494.5 356.0C492.3 366.3 490.9 369.2 490.5 377.0C490.1 384.8 492.4 395.3 492.3 403.0C492.2 410.7 492.1 417.5 490.0 423.0C487.9 428.5 484.4 432.9 479.8 436.0C475.2 439.1 465.6 440.5 462.7 441.4"/>
<path d="M493.3 136.0C493.4 138.3 493.4 144.3 494.0 150.0C494.6 155.7 495.9 164.3 496.7 170.0C497.5 175.7 497.4 176.0 499.0 184.0C500.6 192.0 504.5 207.8 506.0 218.0C507.5 228.2 508.3 236.3 508.0 245.0C507.7 253.7 505.5 258.3 504.0 270.0C502.5 281.7 501.3 300.7 499.0 315.0C496.7 329.3 492.1 345.7 490.0 356.0C487.9 366.3 486.8 369.2 486.6 377.0C486.4 384.8 488.9 395.7 488.9 403.0C488.9 410.3 488.7 416.2 486.6 421.0C484.5 425.8 480.8 429.0 476.4 432.0C472.0 435.0 463.1 437.8 460.5 439.0"/>
<path d="M506.4 122.0C506.2 125.7 505.2 136.0 505.5 144.0C505.8 152.0 506.4 162.3 508.0 170.0C509.6 177.7 512.9 183.3 515.0 190.0C517.1 196.7 519.6 202.3 520.7 210.0C521.8 217.7 522.2 226.0 521.8 236.0C521.3 246.0 519.0 260.2 518.0 270.0C517.0 279.8 515.6 285.8 515.5 295.0C515.4 304.2 517.7 315.8 517.5 325.0C517.3 334.2 516.6 342.7 514.4 350.0C512.2 357.3 506.6 362.3 504.5 369.0C502.4 375.7 501.9 383.2 501.5 390.0C501.1 396.8 502.8 403.3 502.0 410.0C501.2 416.7 499.8 424.4 496.8 430.0C493.9 435.6 486.9 440.2 484.3 443.6C481.7 447.0 481.6 449.4 481.0 450.5"/>
<path d="M510.3 122.0C510.2 125.7 509.2 136.0 509.5 144.0C509.8 152.0 510.5 162.3 512.0 170.0C513.5 177.7 516.4 183.3 518.4 190.0C520.4 196.7 522.9 202.3 524.0 210.0C525.1 217.7 525.6 226.0 525.2 236.0C524.8 246.0 522.5 260.2 521.5 270.0C520.5 279.8 519.0 285.8 519.0 295.0C519.0 304.2 521.5 315.8 521.5 325.0C521.5 334.2 521.3 342.7 519.0 350.0C516.7 357.3 510.0 362.3 507.6 369.0C505.2 375.7 504.9 383.2 504.5 390.0C504.1 396.8 506.2 403.0 505.5 410.0C504.8 417.0 503.5 425.8 500.2 432.0C496.9 438.2 488.3 443.9 485.5 447.0C482.7 450.1 483.6 449.9 483.2 450.5"/>
<path d="M522.0 131.5C521.7 132.1 520.8 131.9 520.0 135.0C519.2 138.1 517.8 144.2 517.5 150.0C517.2 155.8 517.2 164.2 518.0 170.0C518.8 175.8 519.9 178.9 522.0 185.0C524.1 191.1 529.0 202.3 530.9 206.8C532.8 211.3 532.3 211.8 533.4 211.8C534.5 211.8 536.3 211.6 537.7 207.0C539.1 202.4 541.0 191.0 542.0 184.0C543.0 177.0 543.6 171.3 543.5 165.0C543.4 158.7 542.2 149.8 541.6 146.0C541.0 142.2 540.3 143.1 540.0 142.5"/>
<path d="M522.0 131.5C522.0 132.1 522.5 131.9 522.3 135.0C522.1 138.1 520.9 144.2 520.7 150.0C520.5 155.8 520.2 164.7 521.0 170.0C521.8 175.3 523.4 176.7 525.2 182.0C527.0 187.3 530.1 199.8 532.0 202.0C533.9 204.2 535.5 200.0 536.6 195.5C537.7 191.0 538.2 182.6 538.5 175.0C538.8 167.4 538.2 154.8 538.2 150.0C538.2 145.2 537.9 147.2 538.2 146.0C538.5 144.8 539.7 143.1 540.0 142.5"/>
<path d="M543.9 130.0C544.1 129.7 544.6 128.2 545.0 128.2C545.4 128.2 544.9 126.4 546.0 130.0C547.1 133.6 550.0 143.3 551.5 150.0C553.0 156.7 554.2 163.3 555.0 170.0C555.8 176.7 556.0 182.0 556.0 190.0C556.0 198.0 555.2 208.8 554.8 218.0C554.4 227.2 553.1 236.7 553.5 245.0C553.9 253.3 554.9 261.7 557.0 268.0C559.1 274.3 563.8 279.3 566.0 283.0C568.2 286.7 569.3 288.8 570.0 290.0"/>
<path d="M543.9 130.0C544.8 133.3 547.6 143.3 549.0 150.0C550.4 156.7 551.4 163.3 552.0 170.0C552.6 176.7 552.6 182.0 552.5 190.0C552.4 198.0 551.8 208.8 551.4 218.0C551.0 227.2 549.7 236.3 550.0 245.0C550.3 253.7 551.0 262.8 553.0 270.0C555.0 277.2 559.2 282.8 562.0 288.0C564.8 293.2 568.7 298.8 570.0 301.0"/>
<path d="M553.5 122.0C554.1 124.2 555.8 131.3 557.0 135.0C558.2 138.7 560.2 138.2 561.0 144.0C561.8 149.8 561.7 161.5 562.0 170.0C562.3 178.5 562.2 188.0 563.0 195.0C563.8 202.0 565.8 207.0 567.0 212.0C568.2 217.0 569.5 222.8 570.0 225.0"/>
<path d="M555.2 122.0C555.8 123.7 557.6 128.3 559.0 132.0C560.4 135.7 562.7 137.7 563.8 144.0C564.9 150.3 565.0 163.2 565.5 170.0C566.0 176.8 565.8 180.0 566.5 185.0C567.2 190.0 569.4 197.5 570.0 200.0"/>
<path d="M516.5 476.0C515.5 473.3 511.7 466.5 510.8 460.0C509.9 453.5 510.3 445.3 511.0 437.0C511.7 428.7 514.2 416.5 515.2 410.0C516.2 403.5 515.7 403.2 516.7 398.0C517.7 392.8 518.7 386.8 521.2 378.5C523.7 370.2 529.8 356.1 531.8 348.0C533.8 339.9 533.1 337.3 533.3 330.0C533.5 322.7 533.9 312.0 533.2 304.0C532.5 296.0 530.0 289.0 529.0 282.0C528.0 275.0 527.6 268.1 527.5 262.0C527.4 255.9 527.6 249.8 528.6 245.5C529.6 241.2 531.5 237.6 533.2 236.4C534.9 235.2 537.5 236.0 538.9 238.6C540.3 241.2 540.5 246.8 541.5 252.0C542.5 257.2 543.3 263.3 544.7 270.0C546.1 276.7 547.4 283.7 550.0 292.0C552.6 300.3 558.4 312.3 560.5 320.0C562.6 327.7 561.6 332.7 562.7 338.0C563.8 343.3 565.8 348.3 567.0 352.0C568.2 355.7 569.5 358.7 570.0 360.0"/>
<path d="M518.3 471.5C517.6 469.4 515.0 464.8 514.3 459.0C513.6 453.2 513.6 445.2 514.3 437.0C514.9 428.8 517.3 416.5 518.2 410.0C519.1 403.5 518.6 403.2 519.7 398.0C520.8 392.8 522.4 387.3 525.0 378.5C527.6 369.7 533.6 353.1 535.6 345.0C537.6 336.9 537.1 336.8 537.1 330.0C537.1 323.2 536.4 312.0 535.5 304.0C534.6 296.0 532.8 289.0 532.0 282.0C531.2 275.0 530.9 267.7 530.9 262.0C530.9 256.3 531.2 251.0 532.0 247.7C532.8 244.4 534.5 242.0 535.5 242.0C536.5 242.0 537.3 243.0 538.2 247.7C539.1 252.4 539.6 262.6 541.0 270.0C542.4 277.4 544.3 283.7 546.8 292.0C549.3 300.3 554.1 312.3 556.0 320.0C557.9 327.7 556.7 332.2 558.0 338.0C559.3 343.8 562.0 349.7 564.0 355.0C566.0 360.3 569.0 367.5 570.0 370.0"/>
<path d="M533.0 450.5C532.7 448.2 530.7 443.4 531.0 437.0C531.3 430.6 533.8 419.8 535.0 412.0C536.2 404.2 537.3 396.1 538.0 390.0C538.7 383.9 538.7 379.7 539.4 375.5C540.1 371.3 541.1 367.3 542.4 364.8C543.7 362.3 545.5 360.6 547.0 360.3C548.5 360.1 549.7 360.5 551.5 363.3C553.3 366.1 555.3 372.4 557.6 377.0C559.9 381.6 563.1 387.6 565.2 390.6C567.3 393.6 569.2 394.3 570.0 395.0"/>
<path d="M537.5 448.2C537.0 446.3 534.4 443.0 534.5 437.0C534.6 431.0 537.2 419.8 538.3 412.0C539.3 404.2 540.2 396.1 540.8 390.0C541.4 383.9 541.2 379.2 541.7 375.5C542.2 371.8 543.1 369.5 544.0 367.9C544.9 366.2 546.0 365.6 547.0 365.6C548.0 365.6 548.5 365.2 550.0 367.9C551.5 370.5 553.7 377.5 556.0 381.5C558.3 385.5 561.3 388.8 563.6 392.0C565.9 395.2 568.9 399.5 570.0 401.0"/>
<path d="M543.2 445.0C543.2 442.5 543.0 435.2 543.0 430.0C543.0 424.8 543.0 418.8 543.4 414.0C543.8 409.2 544.1 404.4 545.5 401.2C546.9 398.0 549.8 395.5 551.5 395.0C553.2 394.5 554.5 395.5 556.0 398.0C557.5 400.5 559.4 407.2 560.6 410.0C561.8 412.8 561.7 413.2 563.0 415.0C564.3 416.8 565.5 419.4 568.2 421.0C571.0 422.6 575.1 423.9 579.5 424.5C583.9 425.1 591.8 424.5 594.3 424.5"/>
<path d="M548.0 444.0C547.9 441.7 547.7 435.7 547.5 430.0C547.3 424.3 546.6 414.6 547.0 410.0C547.4 405.4 549.1 404.3 550.0 402.7C550.9 401.1 551.3 400.3 552.3 400.5C553.3 400.7 555.0 402.4 556.0 404.0C557.0 405.6 557.0 406.9 558.3 410.0C559.6 413.1 561.2 419.3 563.6 422.3C566.0 425.3 567.7 427.1 572.7 428.0C577.7 428.9 588.8 427.4 593.7 428.0C598.6 428.6 600.9 430.8 602.3 431.4"/>
  <!-- cursor -->
  <path d="M323 261L323.5 272.7L326 270.5L328.8 275L330.5 274L328 269.8L331 269.5Z" fill="#111" stroke="#111" stroke-width="0.6"/>
 </g>
</svg>
</div>

<div id="status" class="a">
  <div class="a" style="left:0;top:0;width:374px;height:11px;background:#3f3f3f"></div>
  <div class="a" style="left:374px;top:0;width:366px;height:11px;background:#2a2a2a"></div>
</div>
<svg class="a" style="left:0;top:517px" width="800" height="11">
  <g>
   <rect x="64.5" y="2.5" width="14" height="8" rx="3" fill="none" stroke="#5a5a5a" stroke-width="1.5"/><circle cx="68.5" cy="6.5" r="1.6" fill="#5a5a5a"/>
   <path d="M89 3V10H97V6M93 3H98V7M98 3L93 8" fill="none" stroke="#c8c8c8" stroke-width="1.2"/>
   <rect x="107" y="0" width="31" height="11" fill="#a9a9a9"/>
   <text x="108" y="10" font-family="Liberation Mono" font-size="10.5" textLength="28" lengthAdjust="spacingAndGlyphs" fill="#222">128. 94</text>
   <rect x="138" y="0" width="12" height="11" fill="#555"/>
   <path d="M141 4H147L144 8Z" fill="#eee"/>
   <path d="M159 3V10M166 3L161 6.5L166 10Z M176 3L171 6.5L176 10Z" fill="#5e5e5e" stroke="#5e5e5e"/>
   <rect x="185" y="0" width="32" height="11" fill="#a9a9a9"/>
   <text x="187" y="10" font-family="Liberation Mono" font-size="10" fill="#222">1</text>
   <rect x="217" y="0" width="11" height="11" fill="#555"/>
   <path d="M219.5 4H225.5L222.5 8Z" fill="#eee"/>
   <path d="M237 3L242 6.5L237 10ZM248 3L253 6.5L248 10ZM254 3V10" fill="#5e5e5e" stroke="#5e5e5e" stroke-width="0.8"/>
   <path d="M262.5 0V11" stroke="#333" />
   <path d="M424 3L429 6.5L424 10Z" fill="#ddd"/>
   <path d="M445 2L439 6.5L445 11Z" fill="#eee"/>
   <rect x="609" y="0" width="12" height="11" fill="#8e8e8e"/>
  </g>
</svg>
<div class="t" style="left:332px;top:517px;font-size:10px;line-height:11px;color:#cfcfcf;letter-spacing:2px">选择</div>
<div id="vscroll" class="a">
  <svg class="a" style="left:0;top:0" width="12" height="479"><path d="M2 8H10L6 3Z" fill="#ddd"/></svg>
  <div class="a" style="left:0;top:232px;width:12px;height:11px;background:#9a9a9a"></div>
</div>

<div id="right" class="a">
  <svg class="a" style="left:176px;top:2px" width="10" height="6"><path d="M0 0L4 3L0 6zM5 0L9 3L5 6z" fill="#cfcfcf"/></svg>
</div>
<!-- gradient panel -->
<div class="a" style="left:813px;top:31px;width:187px;height:15px;background:#393939"></div>
<div class="a" style="left:923px;top:31px;width:34px;height:15px;background:#4a4a4a"></div>
<div class="t" style="left:818px;top:33px;color:#b8b8b8;letter-spacing:2px">颜色</div>
<div class="t" style="left:849px;top:33px;color:#b8b8b8;letter-spacing:2px">颜色参考</div>
<div class="t" style="left:898px;top:33px;color:#b8b8b8;letter-spacing:2px">描边</div>
<svg class="a" style="left:927px;top:34px" width="6" height="9"><path d="M0.5 3.5L3 1L5.5 3.5M0.5 5.5L3 8L5.5 5.5" fill="none" stroke="#ddd" stroke-width="1"/></svg>
<div class="t" style="left:934px;top:33px;color:#e8e8e8;letter-spacing:2px">渐变</div>
<svg class="a" style="left:986px;top:35px" width="12" height="8"><path d="M0 2H4L2 4.5Z" fill="#ddd"/><path d="M5 1H11M5 3.5H11M5 6H11" stroke="#bbb" stroke-width="1.2"/></svg>
<div class="a" style="left:813px;top:46px;width:187px;height:184px;background:#4a4a4a"></div>
<div class="a" style="left:817px;top:52px;width:24px;height:23px;background:linear-gradient(90deg,#fff,#000);border:1px solid #222"></div>
<svg class="a" style="left:844px;top:62px" width="5" height="3"><path d="M0 0H5L2.5 3Z" fill="#ddd"/></svg>
<div class="t" style="left:856px;top:57px;color:#cfcfcf">类型：</div>
<div class="a" style="left:886px;top:52px;width:109px;height:14px;background:#5c5c5c;border:1px solid #3c3c3c"></div>
<div class="a" style="left:982px;top:53px;width:1px;height:12px;background:#4b4b4b"></div>
<svg class="a" style="left:985px;top:56px" width="8" height="6"><path d="M0 0H8L4 5Z" fill="#e8e8e8"/></svg>
<div class="t" style="left:857px;top:77px;color:#9a9a9a">描边：</div>
<svg class="a" style="left:886px;top:72px" width="55" height="16">
 <rect x="0.5" y="0.5" width="54" height="15" fill="#4e4e4e" stroke="#3e3e3e"/>
 <path d="M18.5 1V15M36.5 1V15" stroke="#3a3a3a"/>
 <path d="M5 13V4H13V8H8V13" fill="none" stroke="#777" stroke-width="1.2"/>
 <path d="M23 13V4H31M27 13V8H31" fill="none" stroke="#777" stroke-width="1.2"/>
 <path d="M41 13V4H50M44 13V8H50" fill="none" stroke="#777" stroke-width="1.2"/>
</svg>
<div class="a" style="left:817px;top:80px;width:16px;height:15px;background:#fff;border:1px solid #3a3a3a;z-index:2"></div>
<svg class="a" style="left:825px;top:88px" width="16" height="16"><rect x="0" y="0" width="16" height="16" fill="#fff"/><rect x="5" y="5" width="6" height="6" fill="#333"/><path d="M0 16L16 0" stroke="#c0282c" stroke-width="1.5"/></svg>
<svg class="a" style="left:866px;top:95px" width="13" height="11"><path d="M1 10H12M1 10L10 3M6 10A5 5 0 0 0 5 6.5" fill="none" stroke="#777" stroke-width="1"/></svg>
<div class="a" style="left:885px;top:94px;width:52px;height:14px;background:#6e6e6e;border:1px solid #3c3c3c"></div>
<div class="a" style="left:925px;top:95px;width:11px;height:12px;background:#707070;border-left:1px solid #5a5a5a"></div>
<svg class="a" style="left:927px;top:99px" width="7" height="5"><path d="M0 0H7L3.5 4Z" fill="#bdbdbd"/></svg>
<svg class="a" style="left:868px;top:113px" width="14" height="16"><path d="M2 1V14M0.5 1H3.5M0.5 14H3.5" stroke="#777" stroke-width="1"/><ellipse cx="9" cy="9" rx="4" ry="3" fill="none" stroke="#777" stroke-width="1"/><path d="M5 13H13" stroke="#777"/></svg>
<div class="a" style="left:885px;top:114px;width:52px;height:14px;background:#6e6e6e;border:1px solid #3c3c3c"></div>
<div class="a" style="left:925px;top:115px;width:11px;height:12px;background:#707070;border-left:1px solid #5a5a5a"></div>
<svg class="a" style="left:927px;top:119px" width="7" height="5"><path d="M0 0H7L3.5 4Z" fill="#bdbdbd"/></svg>
<svg class="a" style="left:823px;top:113px" width="13" height="12"><rect x="1" y="1" width="5" height="3" fill="#777"/><path d="M7 2.5H12M1 9H6" stroke="#777" stroke-width="1"/><rect x="7" y="7" width="5" height="4" fill="#777"/></svg>
<div class="a" style="left:821px;top:140px;width:153px;height:30px;background:linear-gradient(90deg,#fff 0%,#a6a6a6 40%,#555 70%,#000 100%);border:1px solid #2a2a2a"></div>
<svg class="a" style="left:982px;top:143px" width="10" height="11"><path d="M1 2.5H9M3.5 2.5V1H6.5V2.5M2 3.5H8V10H2Z" fill="none" stroke="#666" stroke-width="1"/><path d="M4 5V9M6 5V9" stroke="#666"/></svg>
<div class="t" style="left:838px;top:192px;color:#9a9a9a">不透明度：</div>
<div class="a" style="left:885px;top:190px;width:52px;height:14px;background:#6e6e6e;border:1px solid #3c3c3c"></div>
<div class="a" style="left:925px;top:191px;width:11px;height:12px;background:#707070;border-left:1px solid #5a5a5a"></div>
<svg class="a" style="left:927px;top:195px" width="7" height="5"><path d="M0 0H7L3.5 4Z" fill="#bdbdbd"/></svg>
<div class="t" style="left:856px;top:212px;color:#9a9a9a">位置：</div>
<div class="a" style="left:885px;top:211px;width:52px;height:14px;background:#6e6e6e;border:1px solid #3c3c3c"></div>
<div class="a" style="left:925px;top:212px;width:11px;height:12px;background:#707070;border-left:1px solid #5a5a5a"></div>
<svg class="a" style="left:927px;top:216px" width="7" height="5"><path d="M0 0H7L3.5 4Z" fill="#bdbdbd"/></svg>
<!-- layers panel -->
<div class="a" style="left:813px;top:232px;width:187px;height:14px;background:#393939"></div>
<div class="a" style="left:863px;top:232px;width:28px;height:14px;background:#4a4a4a"></div>
<div class="t" style="left:818px;top:234px;color:#b8b8b8;letter-spacing:2px">色板</div>
<div class="t" style="left:843px;top:234px;color:#a0a0a0;letter-spacing:2px">画笔</div>
<div class="t" style="left:866px;top:234px;color:#e8e8e8;letter-spacing:2px">图层</div>
<div class="t" style="left:896px;top:234px;color:#b8b8b8">路径查找</div>
<div class="t" style="left:935px;top:234px;color:#b8b8b8;letter-spacing:2px">对齐</div>
<svg class="a" style="left:986px;top:236px" width="12" height="8"><path d="M0 2H4L2 4.5Z" fill="#ddd"/><path d="M5 1H11M5 3.5H11M5 6H11" stroke="#bbb" stroke-width="1.2"/></svg>
<div class="a" style="left:813px;top:246px;width:187px;height:166px;background:#4a4a4a"></div>
<div class="a" style="left:987px;top:251px;width:9px;height:161px;background:#2e2e2e"></div>
<svg class="a" style="left:987px;top:253px" width="9" height="6"><path d="M0.5 5H8.5L4.5 1Z" fill="#ddd"/></svg>
<svg class="a" style="left:987px;top:405px" width="9" height="6"><path d="M0.5 1H8.5L4.5 5Z" fill="#ddd"/></svg>
<div class="a" style="left:988px;top:357px;width:8px;height:26px;background:#a0a0a0"></div>

<div class="a" style="left:818px;top:251px;width:168px;height:16px;background:#535353;border-bottom:1px solid #3b3b3b"></div>
<svg class="a" style="left:819px;top:255px" width="13" height="9"><path d="M1 4.5C3 1 10 1 12 4.5C10 8 3 8 1 4.5Z" fill="#d8d8d8"/><circle cx="6.5" cy="4.5" r="2.2" fill="#333"/></svg>
<div class="a" style="left:850px;top:251px;width:4px;height:16px;background:#5a80d2"></div>
<svg class="a" style="left:918px;top:252px" width="15" height="15"><rect x="0" y="0" width="15" height="15" fill="#222"/><rect x="1" y="1" width="13" height="13" fill="#fff"/><path d="M3 2C4 10 5 12 12 13" stroke="#7a2a35" stroke-width="1" fill="none"/><path d="M3 2V13" stroke="#999" stroke-width="0.6"/></svg>
<svg class="a" style="left:961px;top:254px" width="11" height="11"><circle cx="5.5" cy="5.5" r="3.7" fill="#444" stroke="#c8c8c8" stroke-width="1.2"/><circle cx="5.5" cy="5.5" r="1.4" fill="#999"/></svg>
<div class="a" style="left:818px;top:267px;width:168px;height:17px;background:#535353;border-bottom:1px solid #3b3b3b"></div>
<svg class="a" style="left:819px;top:271px" width="13" height="9"><path d="M1 4.5C3 1 10 1 12 4.5C10 8 3 8 1 4.5Z" fill="#d8d8d8"/><circle cx="6.5" cy="4.5" r="2.2" fill="#333"/></svg>
<div class="a" style="left:850px;top:267px;width:4px;height:17px;background:#5a80d2"></div>
<svg class="a" style="left:918px;top:268px" width="15" height="15"><rect x="0" y="0" width="15" height="15" fill="#222"/><rect x="1" y="1" width="13" height="13" fill="#fff"/><path d="M4 13C5 8 6 4 8 2M8 2C9 5 10 8 10 13" stroke="#9a8a90" stroke-width="0.8" fill="none"/></svg>
<svg class="a" style="left:961px;top:270px" width="11" height="11"><circle cx="5.5" cy="5.5" r="3.7" fill="#444" stroke="#c8c8c8" stroke-width="1.2"/><circle cx="5.5" cy="5.5" r="1.4" fill="#999"/></svg>
<div class="a" style="left:818px;top:284px;width:168px;height:16px;background:#535353;border-bottom:1px solid #3b3b3b"></div>
<svg class="a" style="left:819px;top:288px" width="13" height="9"><path d="M1 4.5C3 1 10 1 12 4.5C10 8 3 8 1 4.5Z" fill="#d8d8d8"/><circle cx="6.5" cy="4.5" r="2.2" fill="#333"/></svg>
<div class="a" style="left:850px;top:284px;width:4px;height:16px;background:#5a80d2"></div>
<svg class="a" style="left:918px;top:285px" width="15" height="15"><rect x="0" y="0" width="15" height="15" fill="#222"/><rect x="1" y="1" width="13" height="13" fill="#fff"/><path d="M7 2C8 6 7 10 8 13M6 5L9 3" stroke="#aaa" stroke-width="0.7" fill="none"/></svg>
<svg class="a" style="left:961px;top:287px" width="11" height="11"><circle cx="5.5" cy="5.5" r="3.7" fill="#444" stroke="#c8c8c8" stroke-width="1.2"/><circle cx="5.5" cy="5.5" r="1.4" fill="#999"/></svg>
<div class="a" style="left:818px;top:300px;width:168px;height:16px;background:#535353;border-bottom:1px solid #3b3b3b"></div>
<svg class="a" style="left:819px;top:304px" width="13" height="9"><path d="M1 4.5C3 1 10 1 12 4.5C10 8 3 8 1 4.5Z" fill="#d8d8d8"/><circle cx="6.5" cy="4.5" r="2.2" fill="#333"/></svg>
<div class="a" style="left:850px;top:300px;width:4px;height:16px;background:#5a80d2"></div>
<svg class="a" style="left:918px;top:301px" width="15" height="15"><rect x="0" y="0" width="15" height="15" fill="#222"/><rect x="1" y="1" width="13" height="13" fill="#fff"/><path d="M5 3C6 7 7 10 9 12M9 3C9 7 10 10 9 13" stroke="#8a7a80" stroke-width="0.8" fill="none"/></svg>
<svg class="a" style="left:961px;top:303px" width="11" height="11"><circle cx="5.5" cy="5.5" r="3.7" fill="#444" stroke="#c8c8c8" stroke-width="1.2"/><circle cx="5.5" cy="5.5" r="1.4" fill="#999"/></svg>
<div class="a" style="left:818px;top:316px;width:168px;height:16px;background:#535353;border-bottom:1px solid #3b3b3b"></div>
<svg class="a" style="left:819px;top:320px" width="13" height="9"><path d="M1 4.5C3 1 10 1 12 4.5C10 8 3 8 1 4.5Z" fill="#d8d8d8"/><circle cx="6.5" cy="4.5" r="2.2" fill="#333"/></svg>
<div class="a" style="left:850px;top:316px;width:4px;height:16px;background:#5a80d2"></div>
<svg class="a" style="left:918px;top:317px" width="15" height="15"><rect x="0" y="0" width="15" height="15" fill="#222"/><rect x="1" y="1" width="13" height="13" fill="#fff"/><path d="M7 2C7 6 8 10 7 13" stroke="#aaa" stroke-width="0.7" fill="none"/></svg>
<svg class="a" style="left:961px;top:319px" width="11" height="11"><circle cx="5.5" cy="5.5" r="3.7" fill="#444" stroke="#c8c8c8" stroke-width="1.2"/><circle cx="5.5" cy="5.5" r="1.4" fill="#999"/></svg>
<div class="a" style="left:818px;top:332px;width:168px;height:17px;background:#535353;border-bottom:1px solid #3b3b3b"></div>
<svg class="a" style="left:819px;top:336px" width="13" height="9"><path d="M1 4.5C3 1 10 1 12 4.5C10 8 3 8 1 4.5Z" fill="#d8d8d8"/><circle cx="6.5" cy="4.5" r="2.2" fill="#333"/></svg>
<div class="a" style="left:850px;top:332px;width:4px;height:17px;background:#5a80d2"></div>
<svg class="a" style="left:918px;top:333px" width="15" height="15"><rect x="0" y="0" width="15" height="15" fill="#222"/><rect x="1" y="1" width="13" height="13" fill="#fff"/><path d="M6 2C6 6 7 10 6 13M8 2C8 6 9 10 8 13" stroke="#aaa" stroke-width="0.7" fill="none"/></svg>
<svg class="a" style="left:961px;top:335px" width="11" height="11"><circle cx="5.5" cy="5.5" r="3.7" fill="#444" stroke="#c8c8c8" stroke-width="1.2"/><circle cx="5.5" cy="5.5" r="1.4" fill="#999"/></svg>
<div class="a" style="left:818px;top:349px;width:168px;height:16px;background:#535353;border-bottom:1px solid #3b3b3b"></div>
<svg class="a" style="left:819px;top:353px" width="13" height="9"><path d="M1 4.5C3 1 10 1 12 4.5C10 8 3 8 1 4.5Z" fill="#d8d8d8"/><circle cx="6.5" cy="4.5" r="2.2" fill="#333"/></svg>
<div class="a" style="left:850px;top:349px;width:4px;height:16px;background:#5a80d2"></div>
<svg class="a" style="left:918px;top:350px" width="15" height="15"><rect x="0" y="0" width="15" height="15" fill="#222"/><rect x="1" y="1" width="13" height="13" fill="#fff"/><path d="M2 9C3 4 12 4 13 9Z" fill="#7a2a2e"/><path d="M1 9.5H14" stroke="#7a2a2e" stroke-width="1"/></svg>
<svg class="a" style="left:961px;top:352px" width="11" height="11"><circle cx="5.5" cy="5.5" r="3.7" fill="#444" stroke="#c8c8c8" stroke-width="1.2"/><circle cx="5.5" cy="5.5" r="1.4" fill="#999"/></svg>
<div class="a" style="left:818px;top:365px;width:168px;height:16px;background:#535353;border-bottom:1px solid #3b3b3b"></div>
<svg class="a" style="left:819px;top:369px" width="13" height="9"><path d="M1 4.5C3 1 10 1 12 4.5C10 8 3 8 1 4.5Z" fill="#d8d8d8"/><circle cx="6.5" cy="4.5" r="2.2" fill="#333"/></svg>
<div class="a" style="left:850px;top:365px;width:4px;height:16px;background:#5a80d2"></div>
<svg class="a" style="left:918px;top:366px" width="15" height="15"><rect x="0" y="0" width="15" height="15" fill="#222"/><rect x="1" y="1" width="13" height="13" fill="#fff"/><path d="M6 2C6 6 7 10 6 13M9 2C9 6 10 10 9 13" stroke="#aaa" stroke-width="0.7" fill="none"/></svg>
<svg class="a" style="left:961px;top:368px" width="11" height="11"><circle cx="5.5" cy="5.5" r="3.7" fill="#444" stroke="#c8c8c8" stroke-width="1.2"/><circle cx="5.5" cy="5.5" r="1.4" fill="#999"/></svg>
<div class="a" style="left:818px;top:381px;width:168px;height:17px;background:#535353;border-bottom:1px solid #3b3b3b"></div>
<svg class="a" style="left:819px;top:385px" width="13" height="9"><path d="M1 4.5C3 1 10 1 12 4.5C10 8 3 8 1 4.5Z" fill="#d8d8d8"/><circle cx="6.5" cy="4.5" r="2.2" fill="#333"/></svg>
<div class="a" style="left:850px;top:381px;width:4px;height:17px;background:#5a80d2"></div>
<svg class="a" style="left:918px;top:382px" width="15" height="15"><rect x="0" y="0" width="15" height="15" fill="#222"/><rect x="1" y="1" width="13" height="13" fill="#fff"/><path d="M2 9C5 6 10 6 13 9" stroke="#7a2a2e" stroke-width="1.6" fill="none"/></svg>
<svg class="a" style="left:961px;top:384px" width="11" height="11"><circle cx="5.5" cy="5.5" r="3.7" fill="#444" stroke="#c8c8c8" stroke-width="1.2"/><circle cx="5.5" cy="5.5" r="1.4" fill="#999"/></svg>
<div class="a" style="left:818px;top:398px;width:168px;height:16px;background:#535353;border-bottom:1px solid #3b3b3b"></div>
<svg class="a" style="left:819px;top:402px" width="13" height="9"><path d="M1 4.5C3 1 10 1 12 4.5C10 8 3 8 1 4.5Z" fill="#d8d8d8"/><circle cx="6.5" cy="4.5" r="2.2" fill="#333"/></svg>
<div class="a" style="left:850px;top:398px;width:4px;height:16px;background:#5a80d2"></div>
<svg class="a" style="left:918px;top:399px" width="15" height="15"><rect x="0" y="0" width="15" height="15" fill="#222"/><rect x="1" y="1" width="13" height="13" fill="#fff"/><path d="M6 2C6 6 7 10 6 13M8 2C8 6 9 10 8 13" stroke="#aaa" stroke-width="0.7" fill="none"/></svg>
<svg class="a" style="left:961px;top:401px" width="11" height="11"><circle cx="5.5" cy="5.5" r="3.7" fill="#444" stroke="#c8c8c8" stroke-width="1.2"/><circle cx="5.5" cy="5.5" r="1.4" fill="#999"/></svg>
<div class="a" style="left:833px;top:251px;width:1px;height:161px;background:#3b3b3b"></div>
<div class="a" style="left:959px;top:251px;width:1px;height:161px;background:#3b3b3b"></div>
<div class="a" style="left:986px;top:251px;width:1px;height:161px;background:#3b3b3b"></div>
<div class="a" style="left:802px;top:412px;width:198px;height:116px;background:#494949"></div>
<div class="a" style="left:933px;top:412px;width:22px;height:116px;background:#474747"></div>
<div class="a" style="left:963px;top:424px;width:3px;height:90px;background:#565656"></div>
<div class="a" style="left:969px;top:412px;width:3px;height:100px;background:#5a5a5a"></div>
<div class="a" style="left:975px;top:424px;width:2px;height:80px;background:#545454"></div>
<div class="a" style="left:798px;top:412px;width:4px;height:116px;background:#3a3a3a"></div>

<!-- IME toolbar -->
<div class="a" style="left:693px;top:507px;width:109px;height:19px;background:#f6f6f6;border-top:1px solid #d8d8d8"></div>
<svg class="a" style="left:672px;top:500px" width="132" height="28">
  <g transform="rotate(-12 15 15)"><rect x="6" y="5" width="20" height="20" rx="3" fill="#3db03d"/></g>
  <path d="M21 10.5C19 9 12 9 11 12.5C10 15.5 20 15 20.5 18.5C21 22 13 22.5 10 20.5" fill="none" stroke="#fff" stroke-width="2.8" stroke-linecap="round"/>
  <path d="M32 11H41.5M36.5 11L35 21M33.5 15.5H40V21M31 21.5H42.5" fill="none" stroke="#444" stroke-width="1.8"/>
  <path d="M55 10A6.5 6.5 0 1 1 48 20A6 6 0 0 0 55 10Z" fill="#333"/>
  <circle cx="67" cy="13" r="1.4" fill="none" stroke="#333" stroke-width="1"/>
  <path d="M73 16C74 17 73.5 20 71.5 21" stroke="#333" stroke-width="2" fill="none"/>
  <rect x="81" y="11" width="14" height="10" rx="1" fill="#333"/>
  <path d="M83 13.5H93M83 16H93M84 18.5H92" stroke="#ddd" stroke-width="1" stroke-dasharray="1.2 0.8"/>
  <circle cx="105.5" cy="13" r="2.6" fill="#a9c4b2"/>
  <path d="M100.5 21C100.5 16.5 110.5 16.5 110.5 21Z" fill="#a9c4b2"/>
  <path d="M116 22L122 16C123 14 125 13 127 13C126 15 126 17 124 18C122 18 121 19 120 20L118 23Z" fill="#333"/>
</svg>

</body></html>
